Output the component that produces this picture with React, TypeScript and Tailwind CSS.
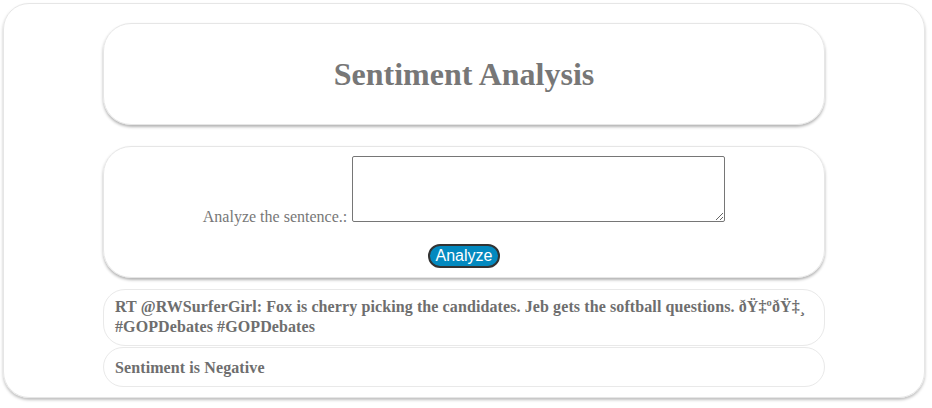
export default function App() {
  const flag = "\u00F0\u0178\u2021\u00BA\u00F0\u0178\u2021\u00B8";

  return (
    <div className="w-[932px] h-[408px] bg-white p-[3px] font-['Liberation_Serif',serif] text-[#777777]">
      <div className="w-[922px] h-[395px] rounded-[26px] border border-[#e6e6e6] shadow-[0_2px_3px_rgba(0,0,0,0.25)] pt-[19px]">
        {/* title */}
        <div className="mx-auto w-[722px] h-[102px] rounded-[28px] border border-[#e6e6e6] shadow-[0_2px_3px_rgba(0,0,0,0.3)] flex items-center justify-center">
          <h1 className="text-[32px] font-bold leading-none">Sentiment Analysis</h1>
        </div>

        {/* form */}
        <div className="mx-auto mt-[21px] w-[722px] h-[132px] rounded-[28px] border border-[#e6e6e6] shadow-[0_2px_3px_rgba(0,0,0,0.3)] pt-[9px] text-center">
          <div>
            <label className="text-[16px] mr-[5px] align-baseline">Analyze the sentence.:</label>
            <textarea className="w-[373px] h-[66px] border border-[#767676] rounded-[2px] align-baseline resize" />
          </div>
          <button className="mt-[15px] h-[24px] px-[6px] rounded-full bg-[#0389bf] border-2 border-[#333333] text-white text-[16px] leading-none font-['Liberation_Sans',sans-serif]">
            Analyze
          </button>
        </div>

        {/* result */}
        <div className="mx-auto mt-[11px] w-[722px] h-[57px] rounded-[22px] border border-[#e9e9e9] px-[11px] pt-[7px] text-[16px] font-bold leading-[20px] tracking-[0.1px] text-[#6e6e6e]">
          RT @RWSurferGirl: Fox is cherry picking the candidates. Jeb gets the softball questions. {flag} #GOPDebates #GOPDebates
        </div>
        <div className="mx-auto mt-[1px] w-[722px] h-[40px] rounded-[22px] border border-[#e9e9e9] px-[11px] pt-[10px] leading-[20px] text-[16px] font-bold tracking-[0.1px] text-[#6e6e6e]">
          Sentiment is Negative
        </div>
      </div>
    </div>
  );
}
